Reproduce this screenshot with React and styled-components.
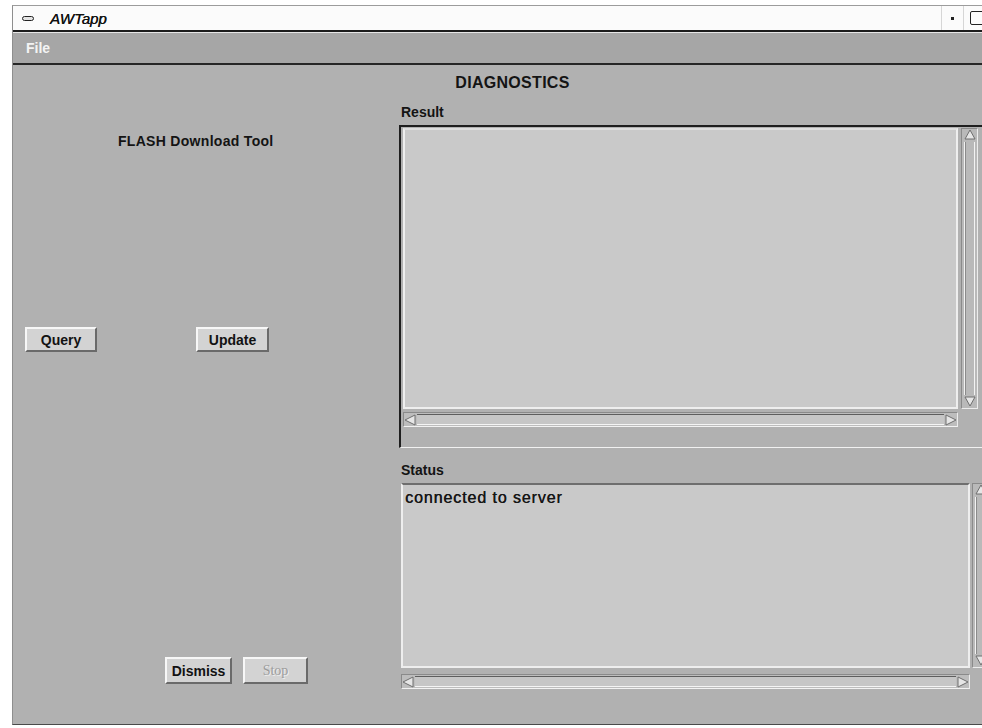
import React from 'react'
import styled, { createGlobalStyle } from 'styled-components'

const GlobalStyle = createGlobalStyle`
    html, body {
        margin: 0;
        padding: 0;
        background: #ffffff;
        overflow: hidden;
    }
    body {
        font-family: 'Liberation Sans', Arial, sans-serif;
        color: #141414;
    }
`

const Window = styled.div`
    box-sizing: border-box;
    width: 1000px;
    height: 720px;
    margin: 5px 0 0 12px;
    display: flex;
    flex-direction: column;
    background: #b1b1b1;
    border-left: 1px solid #8e8e8e;
    border-top: 1px solid #9c9c9c;
    border-bottom: 1px solid #4a4a4a;
`

const TitleBar = styled.div`
    height: 24px;
    display: flex;
    align-items: center;
    background: #fbfbfb;
    border-bottom: 2px solid #1c1c1c;
`

const MenuGlyph = styled.span`
    box-sizing: border-box;
    width: 12px;
    height: 5px;
    margin: 0 16px 0 9px;
    border: 1px solid #222;
    border-radius: 3px;
    background: #e4e4e4;
`

const Title = styled.span`
    flex: 1;
    font-size: 15px;
    font-style: italic;
    color: #111;
    text-shadow: 0.3px 0 0 #111;
`

const TitleControl = styled.div`
    height: 24px;
    display: flex;
    align-items: center;
    justify-content: ${p => p.$justify || 'center'};
    width: ${p => p.$w}px;
    border-left: 1px solid #d6d6d6;
`

const Dot = styled.span`
    width: 3px;
    height: 3px;
    background: #222;
`

const BoxGlyph = styled.span`
    box-sizing: border-box;
    width: 14px;
    height: 14px;
    border: 1px solid #222;
    border-radius: 2px;
    margin-left: 6px;
`

const MenuBar = styled.div`
    height: 30px;
    display: flex;
    align-items: center;
    background: #a6a6a6;
    border-top: 1px solid #e6e6e6;
    border-bottom: 2px solid #262626;
`

const MenuItem = styled.span`
    margin-left: 13px;
    font-size: 14px;
    font-weight: bold;
    color: #f4f4f4;
`

const Content = styled.div`
    flex: 1;
    display: flex;
    flex-direction: column;
`

const Heading = styled.div`
    padding-top: 8px;
    line-height: 20px;
    text-align: center;
    font-size: 16px;
    font-weight: bold;
    letter-spacing: 0.3px;
`

const Columns = styled.div`
    flex: 1;
    display: flex;
`

const LeftColumn = styled.div`
    width: 386px;
    display: flex;
    flex-direction: column;
    padding-bottom: 40px;
`

const ToolTitle = styled.div`
    margin: 39px 0 0 105px;
    line-height: 18px;
    font-size: 14px;
    font-weight: bold;
    letter-spacing: 0.3px;
`

const ButtonRow = styled.div`
    display: flex;
    gap: ${p => p.$gap}px;
    margin: ${p => p.$margin};
`

const Button = styled.button`
    box-sizing: border-box;
    width: ${p => p.$w}px;
    height: ${p => p.$h || 25}px;
    padding: 0;
    background: #d3d3d3;
    border: 2px solid;
    border-color: #f7f7f7 #6a6a6a #6a6a6a #f7f7f7;
    font-family: 'Liberation Sans', Arial, sans-serif;
    font-size: 14px;
    font-weight: bold;
    color: #121212;

    &:disabled {
        font-family: 'Liberation Serif', 'Times New Roman', serif;
        font-weight: normal;
        color: #9c9c9c;
        text-shadow: 1px 1px 0 #efefef;
    }
`

const RightColumn = styled.div`
    flex: 1;
    display: flex;
    flex-direction: column;
`

const Label = styled.div`
    margin: ${p => p.$top}px 0 5px 2px;
    line-height: 16px;
    font-size: 14px;
    font-weight: bold;
`

const ResultFrame = styled.div`
    display: grid;
    grid-template-columns: 555px 17px;
    grid-template-rows: 281px 15px;
    column-gap: 3px;
    row-gap: 3px;
    padding: 1px 0 20px 2px;
    border-top: 2px solid #1e1e1e;
    border-left: 2px solid #1e1e1e;
    border-bottom: 1px solid #f1f1f1;
`

const StatusFrame = styled.div`
    display: grid;
    grid-template-columns: 569px 17px;
    grid-template-rows: 185px 15px;
    column-gap: 2px;
    row-gap: 6px;
    padding-left: 2px;
`

const TextArea = styled.div`
    box-sizing: border-box;
    background: #c9c9c9;
    border: 2px solid #eeeeee;
    border-top-color: ${p => (p.$dark ? '#6e6e6e' : '#dedede')};
    padding: 4px 2px;
    font-size: 16px;
    line-height: 18px;
    letter-spacing: 0.9px;
    color: #161616;
    text-shadow: 0.4px 0 0 #161616;
`

const VScroll = styled.div`
    box-sizing: border-box;
    display: flex;
    flex-direction: column;
    align-items: center;
    background: #b9b9b9;
    border: 1px solid #8a8a8a;
    border-right-color: #ececec;
    border-bottom-color: #ececec;
`

const VTrough = styled.div`
    flex: 1;
    width: 9px;
    margin: 1px 0;
    border-left: 1px solid #f2f2f2;
    border-right: 1px solid #f2f2f2;
    box-shadow: inset 1px 0 0 #8a8a8a;
`

const HScroll = styled.div`
    box-sizing: border-box;
    display: flex;
    align-items: center;
    background: #bdbdbd;
    border: 1px solid #8a8a8a;
    border-right-color: #ececec;
    border-bottom-color: #f2f2f2;
`

const HTrough = styled.div`
    flex: 1;
    height: 9px;
    margin: 0 1px;
    border-top: 1px solid #5e5e5e;
    border-bottom: 1px solid #f4f4f4;
    background: #c6c6c6;
`

const Arrow = ({ dir }) => {
    const pts = {
        up: '6,1 11,10 1,10',
        down: '1,1 11,1 6,10',
        left: '1,6 11,1 11,11',
        right: '11,6 1,1 1,11',
    }[dir]
    return (
        <svg width="12" height="12" viewBox="0 0 12 12" style={{ flex: 'none' }}>
            <polygon points={pts} fill="#e6e6e6" stroke="#6f6f6f" strokeWidth="1" />
        </svg>
    )
}

const VerticalBar = () => (
    <VScroll>
        <Arrow dir="up" />
        <VTrough />
        <Arrow dir="down" />
    </VScroll>
)

const HorizontalBar = () => (
    <HScroll>
        <Arrow dir="left" />
        <HTrough />
        <Arrow dir="right" />
    </HScroll>
)

const App = () => (
    <>
        <GlobalStyle />
        <Window>
            <TitleBar>
                <MenuGlyph />
                <Title>AWTapp</Title>
                <TitleControl $w={21}>
                    <Dot />
                </TitleControl>
                <TitleControl $w={48} $justify="flex-start">
                    <BoxGlyph />
                </TitleControl>
            </TitleBar>
            <MenuBar>
                <MenuItem>File</MenuItem>
            </MenuBar>
            <Content>
                <Heading>DIAGNOSTICS</Heading>
                <Columns>
                    <LeftColumn>
                        <ToolTitle>FLASH Download Tool</ToolTitle>
                        <ButtonRow $gap={99} $margin="177px 0 0 12px">
                            <Button $w={72}>Query</Button>
                            <Button $w={73}>Update</Button>
                        </ButtonRow>
                        <ButtonRow $gap={11} $margin="auto 0 0 152px">
                            <Button $w={67} $h={27}>Dismiss</Button>
                            <Button $w={65} $h={27} disabled>Stop</Button>
                        </ButtonRow>
                    </LeftColumn>
                    <RightColumn>
                        <Label $top={11}>Result</Label>
                        <ResultFrame>
                            <TextArea />
                            <VerticalBar />
                            <HorizontalBar />
                        </ResultFrame>
                        <Label $top={14}>Status</Label>
                        <StatusFrame>
                            <TextArea $dark>connected to server</TextArea>
                            <VerticalBar />
                            <HorizontalBar />
                        </StatusFrame>
                    </RightColumn>
                </Columns>
            </Content>
        </Window>
    </>
)

export default App
